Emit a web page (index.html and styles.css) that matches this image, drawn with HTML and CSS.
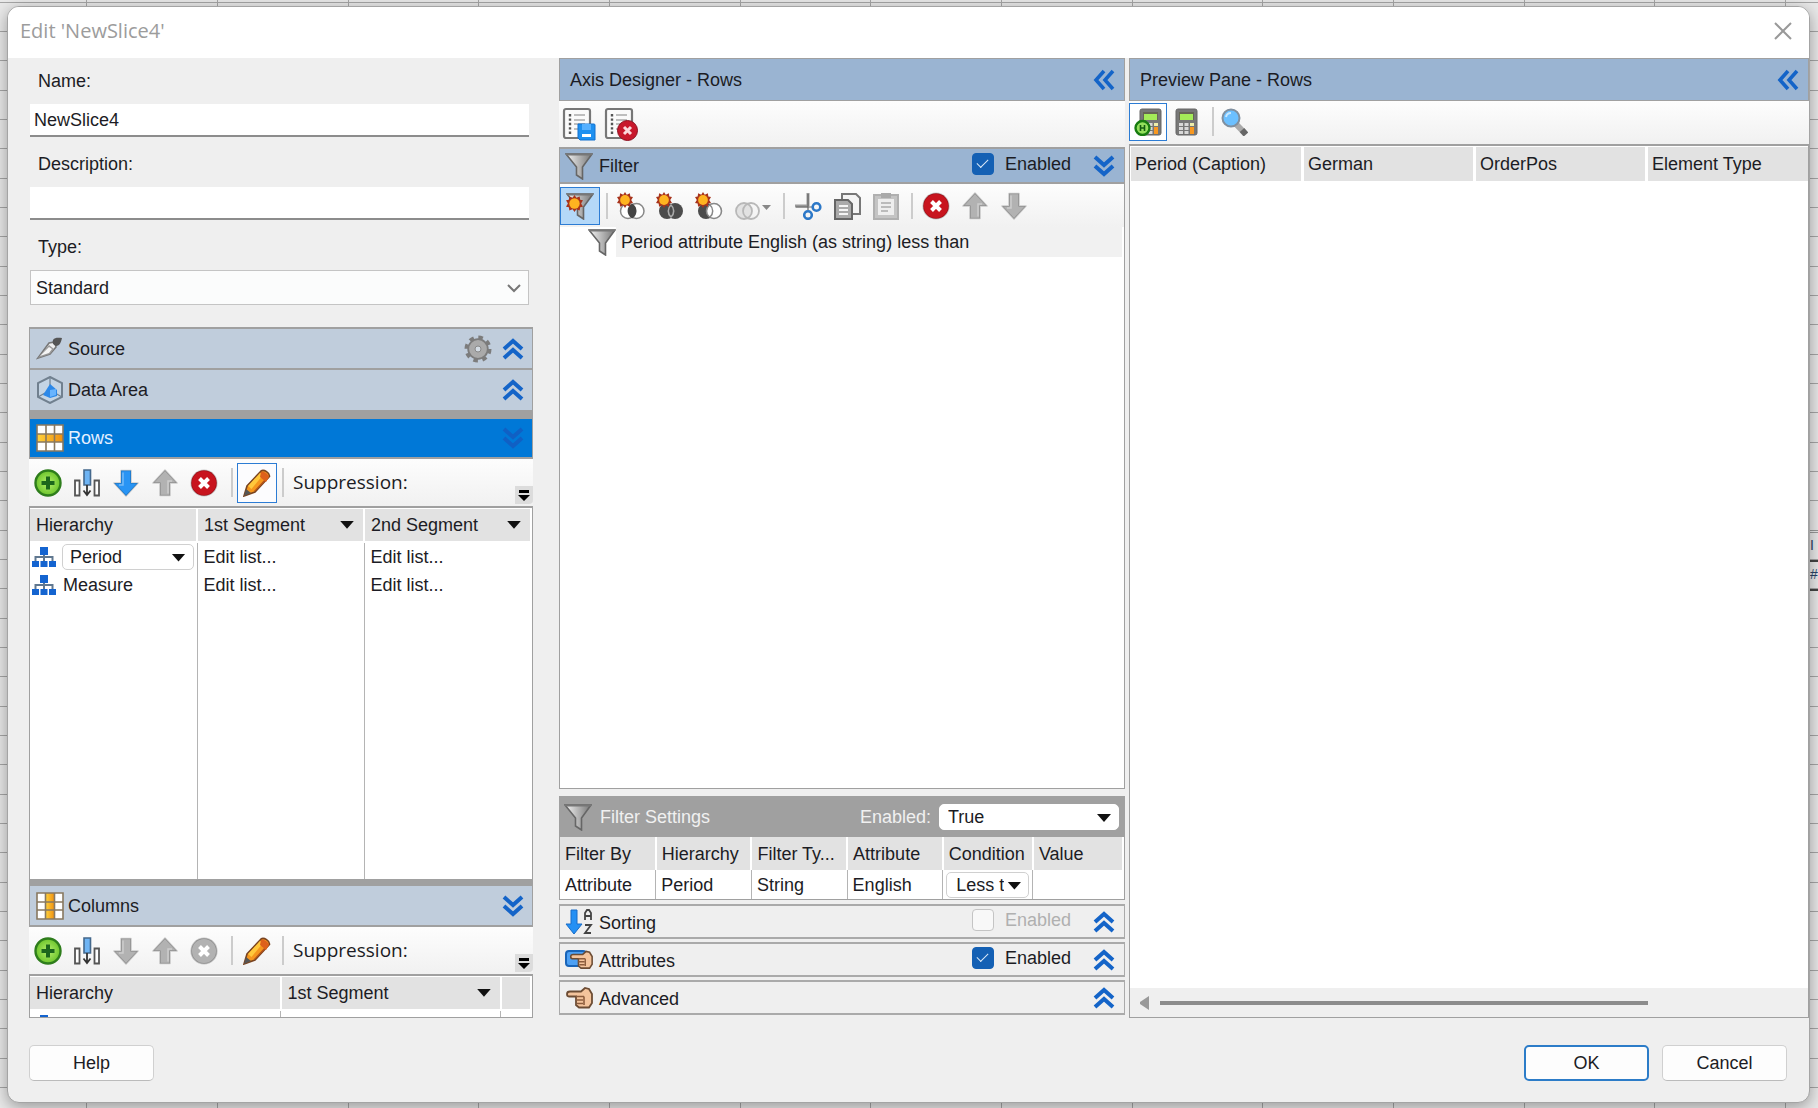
FILE: index.html
```html
<!DOCTYPE html>
<html lang="en">
<head>
    <meta charset="UTF-8">
    <meta name="viewport" content="width=device-width, initial-scale=1.0">
    <title>Edit 'NewSlice4'</title>
    <link rel="stylesheet" href="styles.css">
</head>
<body>
    <!-- Icons -->
    <svg class="sprite" aria-hidden="true">
        <defs>
            <linearGradient id="g-funnel" x1="0" x2="1"><stop offset="0" stop-color="#f4f4f4"/><stop offset="1" stop-color="#777"/></linearGradient>
            <linearGradient id="g-orange" x1="0" x2="1"><stop offset="0" stop-color="#ffd23c"/><stop offset="1" stop-color="#f09010"/></linearGradient>
            <radialGradient id="g-green"><stop offset="0" stop-color="#b4f06a"/><stop offset="1" stop-color="#6cc42c"/></radialGradient>
        </defs>
        <symbol id="up2" viewBox="0 0 22 22"><path d="M2 11l9-8 9 8M2 20l9-8 9 8" fill="none" stroke="#1464c8" stroke-width="4"/></symbol>
        <symbol id="down2" viewBox="0 0 22 22"><path d="M2 2l9 8 9-8M2 11l9 8 9-8" fill="none" stroke="currentColor" stroke-width="4"/></symbol>
        <symbol id="left2" viewBox="0 0 22 22"><path d="M11 2l-8 9 8 9M20 2l-8 9 8 9" fill="none" stroke="#1464c8" stroke-width="3.6"/></symbol>
        <symbol id="add" viewBox="0 0 28 28"><circle cx="14" cy="14" r="12.5" fill="url(#g-green)" stroke="#2e7d1c" stroke-width="2.4"/><path d="M14 7.500v13M7.500 14h13" stroke="#1c661c" stroke-width="4"/></symbol>
        <symbol id="insert" viewBox="0 0 28 28"><path d="M2 11.500h4.500v15H2zM21.500 11.500H26v15h-4.500z" fill="#fff" stroke="#555" stroke-width="1.800"/><path d="M11 1h6.500v15H11z" fill="#6eb4f4" stroke="#44688c" stroke-width="1.600"/><path d="M14 16v10M10.500 21.500L14 26l3.500-4.500" fill="none" stroke="#333" stroke-width="1.800"/></symbol>
        <symbol id="arrow" viewBox="0 0 28 28"><path d="M9 1.500h10V14h7L14 27 2 14h7z" fill="currentColor" stroke="#0000002e" stroke-width="1.600" stroke-linejoin="round"/><path d="M11 3.500V16H7" fill="none" stroke="#ffffff59" stroke-width="1.500"/></symbol>
        <symbol id="del" viewBox="0 0 28 28"><circle cx="14" cy="14" r="12.800" fill="currentColor" stroke="#00000033" stroke-width="1.600"/><path d="M9.500 9.500l9 9M18.500 9.500l-9 9" stroke="#fff" stroke-width="4"/></symbol>
        <symbol id="pencil" viewBox="0 0 28 28"><path d="M1 27l3-10L18 2c3-2 9 2 8.500 5.500L12 23z" fill="#f5961e" stroke="#7a4420" stroke-width="1.600"/><path d="M5 17L17 4l3 2L8.500 20z" fill="#ffc83c"/><path d="M11 22L23 9l2.500 0-13 13z" fill="#b4521a"/><path d="M17 8l6 5 3-5c-1-3-5-6-8-5z" fill="#dd601c"/><path d="M1 27l2-7 5 4z" fill="#555"/></symbol>
        <symbol id="funnel" viewBox="0 0 28 28"><path d="M1 2h26l-9.500 13v12l-6-4v-8z" fill="url(#g-funnel)" stroke="#666" stroke-width="1.600"/><path d="M1 2.500h26" stroke="#777" stroke-width="2"/></symbol>
        <symbol id="spark" viewBox="0 0 18 18"><path d="M9 0l2 3 3.500-1.500L15 5l3 .5L16 9l2 3.500-3 .5-.5 3.500L11 15l-2 3-2-3-3.500 1.500L3 13l-3-.5L2 9 0 5.500 3 5l.5-3.500L7 3z" fill="#a8341c"/><circle cx="9" cy="9" r="5.500" fill="#ffb420"/></symbol>
        <symbol id="funnel-new" viewBox="0 0 28 28"><use href="#funnel"/><use href="#spark" x="0" y="3" width="17" height="17"/></symbol>
        <symbol id="and" viewBox="0 0 28 28"><circle cx="19.500" cy="19" r="7.500" fill="#fff" stroke="#888" stroke-width="1.500"/><circle cx="11" cy="19" r="7.500" fill="#fff" stroke="#888" stroke-width="1.500"/><path d="M15.200 12.800a7.500 7.500 0 0 1 0 12.400 7.500 7.500 0 0 1-3.600-6.200c0-3 1.500-5 3.600-6.200z" fill="#444" stroke="#444" stroke-width="2"/><use href="#spark" x="0" y="0" width="16" height="16"/></symbol>
        <symbol id="or" viewBox="0 0 28 28"><circle cx="19" cy="19" r="8" fill="#4c4c4c"/><circle cx="11" cy="19" r="8" fill="#4c4c4c"/><path d="M15 13a8 8 0 0 1 0 12 8 8 0 0 1 0-12z" fill="none" stroke="#aaa" stroke-width="1.600"/><use href="#spark" x="0" y="0" width="16" height="16"/></symbol>
        <symbol id="minus" viewBox="0 0 28 28"><circle cx="11" cy="19" r="8" fill="#4c4c4c"/><circle cx="19" cy="19" r="7.500" fill="#fff" stroke="#888" stroke-width="1.600"/><path d="M15 13a8 8 0 0 1 0 12" fill="none" stroke="#888" stroke-width="1.500"/><use href="#spark" x="0" y="0" width="16" height="16"/></symbol>
        <symbol id="sets" viewBox="0 0 38 28"><circle cx="10" cy="19" r="8" fill="#e2e2e2" stroke="#b8b8b8" stroke-width="1.800"/><circle cx="17" cy="19" r="8" fill="none" stroke="#b8b8b8" stroke-width="1.800"/><path d="M28 13h9l-4.500 5z" fill="#888"/></symbol>
        <symbol id="cut" viewBox="0 0 28 28"><path d="M14 1v13M1 14h13" stroke="#999" stroke-width="3"/><path d="M14 2v16M2 15h17" stroke="#666" stroke-width="1.200"/><circle cx="22.500" cy="15" r="3.800" fill="none" stroke="#2c78c8" stroke-width="2.600"/><circle cx="14" cy="23" r="3.800" fill="none" stroke="#2c78c8" stroke-width="2.600"/></symbol>
        <symbol id="copy" viewBox="0 0 28 28"><path d="M9 2h14l4 4v16H9z" fill="#f4f4f4" stroke="#777" stroke-width="2"/><path d="M2 8h13l4 4v15H2z" fill="#aaa" stroke="#666" stroke-width="2"/><path d="M6 14h9M6 18h9M6 22h9" stroke="#f4f4f4" stroke-width="1.800"/></symbol>
        <symbol id="paste" viewBox="0 0 28 28"><path d="M2 3h24v24H2z" fill="#c4c4c4" stroke="#b0b0b0" stroke-width="2"/><path d="M6 7h16v16H6z" fill="#eee"/><path d="M9 1h10v5H9z" fill="#aaa"/><path d="M9 11h10M9 15h10M9 19h7" stroke="#aaa" stroke-width="1.600"/></symbol>
        <symbol id="gear" viewBox="0 0 28 28"><circle cx="14" cy="14" r="11.500" fill="none" stroke="#7c7c7c" stroke-width="4" stroke-dasharray="4.500 4.530"/><circle cx="14" cy="14" r="9.800" fill="#aaa" stroke="#7c7c7c" stroke-width="1.800"/><circle cx="14" cy="14" r="3" fill="#d4dce4" stroke="#888"/></symbol>
        <symbol id="source" viewBox="0 0 28 28"><path d="M2 23L13 8l6-1 1 5-6 7z" fill="#eee" stroke="#777" stroke-width="1.600"/><path d="M17 5c2-3 6-2 9-2-1 4-2 8-6 8-3-1-4-3-3-6z" fill="#555"/><path d="M2 23l12-4 4-5-5-4z" fill="#999"/><path d="M4 21l9-9 3 2-3 4z" fill="#f4f4f4"/></symbol>
        <symbol id="cube" viewBox="0 0 28 28"><path d="M14 1l12 6v14l-12 6-12-6V7z" fill="#c4d4e4" stroke="#71808f" stroke-width="2"/><path d="M14 1v9M2 21l7-4M26 21l-7-4" stroke="#71808f" stroke-width="1.200"/><path d="M14 8l7 6v6l-7 2-7-3z" fill="#2c88e8"/><path d="M14 14l6-1v6l-6 2z" fill="#68b4ff"/></symbol>
        <symbol id="grid-rows" viewBox="0 0 28 28"><path d="M1 1h26v26H1z" fill="#fff"/><path d="M1 10h26v8H1z" fill="url(#g-orange)"/><path d="M1 1h26v26H1zM10 1v26M18.500 1v26M1 10h26M1 18h26" fill="none" stroke="#887860" stroke-width="1.600"/></symbol>
        <symbol id="grid-cols" viewBox="0 0 28 28"><path d="M1 1h26v26H1z" fill="#fff"/><path d="M9.500 1h9v26h-9z" fill="url(#g-orange)"/><path d="M1 1h26v26H1zM9.500 1v26M18.500 1v26M1 10h26M1 18h26" fill="none" stroke="#887860" stroke-width="1.600"/></symbol>
        <symbol id="tree" viewBox="0 0 24 20"><path d="M12 6v4M3.500 15v-5h17v5M12 10v5" fill="none" stroke="#607890" stroke-width="2"/><path d="M8 0h8v8H8zM0 14h7v6H0zM8.500 14h7v6h-7zM17 14h7v6h-7z" fill="#1464d0"/></symbol>
        <symbol id="page" viewBox="0 0 34 34"><rect x="2" y="2" width="26" height="29" rx="2" fill="#fafafa" stroke="#777" stroke-width="2.200"/><path d="M8 7v20" stroke="#555" stroke-width="2.400" stroke-dasharray="2.400 2"/><path d="M12 8h11M12 13h11M12 17h11M12 22h11" stroke="#aaa" stroke-width="1.400"/></symbol>
        <symbol id="page-save" viewBox="0 0 34 34"><use href="#page"/><path d="M16 17h16q1 0 1 1v15H18l-2-2z" fill="#1e90f0" stroke="#1070d0"/><path d="M20 17h9v6h-9z" fill="#55b0ff"/><path d="M20 27h9v3h-9z" fill="#fff"/></symbol>
        <symbol id="page-del" viewBox="0 0 34 34"><use href="#page"/><circle cx="23.500" cy="23.500" r="10" fill="#c8182c" stroke="#8c1020"/><path d="M20 20l7 7M27 20l-7 7" stroke="#fbd8dc" stroke-width="3"/></symbol>
        <symbol id="calc" viewBox="0 0 28 28"><rect x="4" y="1" width="21" height="26" rx="2" fill="#777" stroke="#666"/><path d="M7 4h15v8H7z" fill="#665"/><path d="M8 6h13v6H8z" fill="#a4ec58"/><path d="M7 15h4v3H7zM12.500 15h4v3h-4zM7 19h4v3H7zM12.500 19h4v3h-4zM7 23h4v3H7zM12.500 23h4v3h-4z" fill="#d8d8d8"/><path d="M18 15h4v3h-4z" fill="#eea"/><path d="M18 19h4v7h-4z" fill="#f89820"/></symbol>
        <symbol id="calc-auto" viewBox="0 0 28 28"><use href="#calc" x="2"/><circle cx="8.500" cy="20" r="7" fill="#94e05c" stroke="#187c10" stroke-width="2.400"/><path d="M6.500 17v6M10.500 17v6M6.500 20h4" fill="none" stroke="#145c10" stroke-width="1.600"/></symbol>
        <symbol id="search" viewBox="0 0 28 28"><path d="M16 16l9.500 10" stroke="#aaa" stroke-width="6"/><path d="M22 22l4 4.500" stroke="#666" stroke-width="6"/><circle cx="11" cy="10" r="8.500" fill="#6cc0ff" stroke="#8090a0" stroke-width="2"/><path d="M6 9a5 5 0 0 1 5-4" fill="none" stroke="#c8e8ff" stroke-width="2"/></symbol>
        <symbol id="hand" viewBox="0 0 28 22"><path d="M2 7c0-2 1-2.500 3-2.500h11L20 1l4 1 3 5v9l-3 4.500H14L11 18V9.500H4C2.500 9.500 2 9 2 7z" fill="#f4c49c" stroke="#6c4c34" stroke-width="1.800"/><path d="M11 9.500h8M11 13h7M12 16.500h6M19 9.500V18" stroke="#8c5c3c" stroke-width="1.600"/></symbol>
        <symbol id="hand-tag" viewBox="0 0 28 22"><rect x="1" y="2" width="20" height="15" rx="3" fill="#4ca0f4" stroke="#1864b8" stroke-width="2"/><use href="#hand" x="4" y="0" width="24" height="22"/></symbol>
        <symbol id="az" viewBox="0 0 28 28"><path d="M6 2h6v14h5L9 26 1 16h5z" fill="#2490f4" stroke="#186cc8"/><path d="M20 12V5l2-3h2l2 3v7M20 8h6M20 17h6l-6 8h6" fill="none" stroke="#444" stroke-width="1.800"/></symbol>
    </svg>

    <!-- Spreadsheet cells showing beside the dialog -->
    <div class="sheet-cells" aria-hidden="true"><div>I</div><div>#</div></div>

    <div class="dialog" role="dialog" aria-labelledby="dialog-title">
        <div class="titlebar">
            <h1 id="dialog-title">Edit 'NewSlice4'</h1>
            <button class="close" aria-label="Close"><svg viewBox="0 0 18 18"><path d="M1 1l16 16M17 1L1 17"/></svg></button>
        </div>

        <div class="content">
            <!-- Left column -->
            <div class="left">
                <div class="fields">
                    <label for="name">Name:</label>
                    <input type="text" id="name" value="NewSlice4">
                    <label for="description">Description:</label>
                    <input type="text" id="description">
                    <label for="type">Type:</label>
                    <div class="select-wrap">
                        <select id="type"><option>Standard</option></select>
                        <svg viewBox="0 0 14 9"><path d="M1 1l6 6 6-6"/></svg>
                    </div>
                </div>

                <div class="sections">
                    <div class="bar">
                        <svg class="icon"><use href="#source"/></svg>
                        <h2>Source</h2>
                        <button aria-label="Source settings"><svg class="icon"><use href="#gear"/></svg></button>
                        <button aria-label="Expand"><svg class="chev"><use href="#up2"/></svg></button>
                    </div>
                    <div class="bar">
                        <svg class="icon"><use href="#cube"/></svg>
                        <h2>Data Area</h2>
                        <button aria-label="Expand"><svg class="chev"><use href="#up2"/></svg></button>
                    </div>
                    <div class="bar split active">
                        <svg class="icon"><use href="#grid-rows"/></svg>
                        <h2>Rows</h2>
                        <button aria-label="Collapse"><svg class="chev"><use href="#down2"/></svg></button>
                    </div>
                    <div class="toolbar axis-tools">
                        <button aria-label="Add"><svg class="icon"><use href="#add"/></svg></button>
                        <button aria-label="Insert"><svg class="icon"><use href="#insert"/></svg></button>
                        <button aria-label="Move down"><svg class="icon blue"><use href="#arrow"/></svg></button>
                        <button aria-label="Move up" disabled><svg class="icon grey flip"><use href="#arrow"/></svg></button>
                        <button aria-label="Delete"><svg class="icon red"><use href="#del"/></svg></button>
                        <span class="sep"></span>
                        <button class="pressed" aria-label="Edit"><svg class="icon"><use href="#pencil"/></svg></button>
                        <span class="sep"></span>
                        <span class="suppression">Suppression:</span>
                        <button class="overflow" aria-label="More"><svg viewBox="0 0 18 18"><path d="M4 4h10v3H4zM3 9h12l-6 6z"/></svg></button>
                    </div>
                    <div class="axis-table">
                        <table>
                            <thead>
                                <tr>
                                    <th>Hierarchy</th>
                                    <th><div class="sortable">1st Segment<i class="tri"></i></div></th>
                                    <th><div class="sortable">2nd Segment<i class="tri"></i></div></th>
                                </tr>
                            </thead>
                            <tbody>
                                <tr>
                                    <td>
                                        <div class="hier">
                                            <svg class="tree"><use href="#tree"/></svg>
                                            <div class="combo">
                                                <select aria-label="Hierarchy"><option>Period</option></select>
                                                <i class="tri"></i>
                                            </div>
                                        </div>
                                    </td>
                                    <td>Edit list...</td>
                                    <td>Edit list...</td>
                                </tr>
                                <tr>
                                    <td><div class="hier"><svg class="tree"><use href="#tree"/></svg>Measure</div></td>
                                    <td>Edit list...</td>
                                    <td>Edit list...</td>
                                </tr>
                                <tr class="filler"><td></td><td></td><td></td></tr>
                            </tbody>
                        </table>
                    </div>
                    <div class="bar split">
                        <svg class="icon"><use href="#grid-cols"/></svg>
                        <h2>Columns</h2>
                        <button aria-label="Collapse"><svg class="chev"><use href="#down2"/></svg></button>
                    </div>
                    <div class="toolbar axis-tools">
                        <button aria-label="Add"><svg class="icon"><use href="#add"/></svg></button>
                        <button aria-label="Insert"><svg class="icon"><use href="#insert"/></svg></button>
                        <button aria-label="Move down" disabled><svg class="icon grey"><use href="#arrow"/></svg></button>
                        <button aria-label="Move up" disabled><svg class="icon grey flip"><use href="#arrow"/></svg></button>
                        <button aria-label="Delete" disabled><svg class="icon grey"><use href="#del"/></svg></button>
                        <span class="sep"></span>
                        <button aria-label="Edit"><svg class="icon"><use href="#pencil"/></svg></button>
                        <span class="sep"></span>
                        <span class="suppression">Suppression:</span>
                        <button class="overflow" aria-label="More"><svg viewBox="0 0 18 18"><path d="M4 4h10v3H4zM3 9h12l-6 6z"/></svg></button>
                    </div>
                    <div class="axis-table columns-table">
                        <table>
                            <thead>
                                <tr>
                                    <th>Hierarchy</th>
                                    <th><div class="sortable">1st Segment<i class="tri"></i></div></th>
                                    <th></th>
                                </tr>
                            </thead>
                            <tbody>
                                <tr><td><svg class="tree"><use href="#tree"/></svg></td><td></td><td></td></tr>
                            </tbody>
                        </table>
                    </div>
                </div>
            </div>

            <!-- Axis designer -->
            <div class="designer">
                <div class="pane-head">
                    <h2>Axis Designer - Rows</h2>
                    <button aria-label="Collapse"><svg class="chev"><use href="#left2"/></svg></button>
                </div>
                <div class="toolbar page-tools">
                    <button aria-label="Save"><svg class="icon"><use href="#page-save"/></svg></button>
                    <button aria-label="Delete"><svg class="icon"><use href="#page-del"/></svg></button>
                </div>
                <div class="filter-head">
                    <svg class="icon"><use href="#funnel"/></svg>
                    <h2>Filter</h2>
                    <label><input type="checkbox" checked>Enabled</label>
                    <button aria-label="Collapse"><svg class="chev"><use href="#down2"/></svg></button>
                </div>
                <div class="filter-body">
                    <div class="toolbar filter-tools">
                        <button class="pressed" aria-label="New filter"><svg class="icon"><use href="#funnel-new"/></svg></button>
                        <span class="sep"></span>
                        <button aria-label="New intersection"><svg class="icon"><use href="#and"/></svg></button>
                        <button aria-label="New union"><svg class="icon"><use href="#or"/></svg></button>
                        <button aria-label="New difference"><svg class="icon"><use href="#minus"/></svg></button>
                        <button aria-label="Change set" disabled><svg class="icon wide"><use href="#sets"/></svg></button>
                        <span class="sep"></span>
                        <button aria-label="Cut"><svg class="icon"><use href="#cut"/></svg></button>
                        <button aria-label="Copy"><svg class="icon"><use href="#copy"/></svg></button>
                        <button aria-label="Paste" disabled><svg class="icon"><use href="#paste"/></svg></button>
                        <span class="sep"></span>
                        <button aria-label="Delete"><svg class="icon red"><use href="#del"/></svg></button>
                        <button aria-label="Move up" disabled><svg class="icon grey flip"><use href="#arrow"/></svg></button>
                        <button aria-label="Move down" disabled><svg class="icon grey"><use href="#arrow"/></svg></button>
                    </div>
                    <div class="filter-item">
                        <svg class="icon"><use href="#funnel"/></svg>
                        <span>Period attribute English (as string) less than</span>
                    </div>
                </div>

                <div class="settings">
                    <div class="settings-head">
                        <svg class="icon"><use href="#funnel"/></svg>
                        <h2>Filter Settings</h2>
                        <label for="filter-enabled">Enabled:</label>
                        <div class="combo">
                            <select id="filter-enabled"><option>True</option></select>
                            <i class="tri"></i>
                        </div>
                    </div>
                    <table>
                        <thead>
                            <tr><th>Filter By</th><th>Hierarchy</th><th>Filter Ty...</th><th>Attribute</th><th>Condition</th><th>Value</th></tr>
                        </thead>
                        <tbody>
                            <tr>
                                <td>Attribute</td><td>Period</td><td>String</td><td>English</td>
                                <td class="condition">
                                    <div class="combo">
                                        <select aria-label="Condition"><option>Less than</option></select>
                                        <i class="tri"></i>
                                    </div>
                                </td>
                                <td></td>
                            </tr>
                        </tbody>
                    </table>
                </div>

                <div class="option">
                    <svg class="icon"><use href="#az"/></svg>
                    <h2>Sorting</h2>
                    <label class="off"><input type="checkbox" disabled>Enabled</label>
                    <button aria-label="Expand"><svg class="chev"><use href="#up2"/></svg></button>
                </div>
                <div class="option">
                    <svg class="icon"><use href="#hand-tag"/></svg>
                    <h2>Attributes</h2>
                    <label><input type="checkbox" checked>Enabled</label>
                    <button aria-label="Expand"><svg class="chev"><use href="#up2"/></svg></button>
                </div>
                <div class="option">
                    <svg class="icon"><use href="#hand"/></svg>
                    <h2>Advanced</h2>
                    <button aria-label="Expand"><svg class="chev"><use href="#up2"/></svg></button>
                </div>
            </div>

            <!-- Preview pane -->
            <div class="preview">
                <div class="pane-head">
                    <h2>Preview Pane - Rows</h2>
                    <button aria-label="Collapse"><svg class="chev"><use href="#left2"/></svg></button>
                </div>
                <div class="toolbar preview-tools">
                    <button class="pressed" aria-label="Automatic calculation"><svg class="icon"><use href="#calc-auto"/></svg></button>
                    <button aria-label="Calculate"><svg class="icon"><use href="#calc"/></svg></button>
                    <span class="sep"></span>
                    <button aria-label="Search"><svg class="icon"><use href="#search"/></svg></button>
                </div>
                <div class="preview-body">
                    <table>
                        <thead>
                            <tr><th>Period (Caption)</th><th>German</th><th>OrderPos</th><th>Element Type</th></tr>
                        </thead>
                    </table>
                    <div class="scrollbar">
                        <svg viewBox="0 0 10 14"><path d="M10 0v14L1 8V6z"/></svg>
                        <div class="thumb"></div>
                    </div>
                </div>
            </div>
        </div>

        <div class="footer">
            <button>Help</button>
            <button class="ok">OK</button>
            <button>Cancel</button>
        </div>
    </div>
</body>
</html>
```

FILE: styles.css
```css
* { margin: 0; padding: 0; box-sizing: border-box; }
body {
    min-height: 100vh;
    display: flex;
    padding: 6px 8px 5px 7px;
    font-family: "Liberation Sans", Arial, sans-serif;
    font-size: 18px;
    line-height: 24px;
    color: #1c1c24;
    position: relative;
    overflow: hidden;
    /* worksheet gridlines */
    background-color: #e9e9e9;
    background-image:
        repeating-linear-gradient(to right, transparent 0 86px, #a6a6a6 86px 87px, transparent 87px 217px, #a6a6a6 217px 218px, transparent 218px 348px, #a6a6a6 348px 349px, transparent 349px 392px),
        repeating-linear-gradient(to bottom, transparent 0 2px, #a6a6a6 2px 3px, transparent 3px 31px, #a6a6a6 31px 32px, transparent 32px 60px, #a6a6a6 60px 61px, transparent 61px 88px);
}
h1, h2 { font-size: 18px; font-weight: normal; }
button, input, select { font: inherit; color: inherit; }
button { background: none; border: none; }
svg { display: block; }
.sprite { position: absolute; width: 0; height: 0; }
.icon { width: 28px; height: 28px; }
.chev { width: 22px; height: 22px; }
.blue { color: #2894f4; }
.red { color: #c8141e; }
.grey { color: #b2b2b2; }
.flip { transform: rotate(180deg); }

.sheet-cells {
    position: absolute;
    right: 0;
    top: 530px;
    width: 8px;
    font-size: 14px;
    color: #2c4468;
    border-top: 3px double #999;
}
.sheet-cells div {
    height: 29px;
    border-bottom: 2px solid #444;
}

.dialog {
    flex: 1;
    display: flex;
    flex-direction: column;
    position: relative;
    background-color: #efefef;
    border: 1px solid #a4a4a4;
    border-radius: 12px;
    box-shadow: 0 4px 16px rgba(0, 0, 0, 0.35);
    overflow: hidden;
}
.titlebar {
    height: 51px;
    display: flex;
    justify-content: space-between;
    align-items: center;
    padding: 0 17px 3px 12px;
    background-color: #fff;
    color: #9c9c9c;
}
.titlebar h1 {
    font-family: "Open Sans", "Noto Sans", sans-serif;
    font-size: 20px;
}
.close svg {
    width: 18px;
    height: 18px;
    fill: none;
    stroke: #999;
    stroke-width: 2;
}

.content {
    flex: 1;
    display: grid;
    grid-template-columns: 551fr 570fr 680fr;
}
.left {
    display: flex;
    flex-direction: column;
    padding: 0 26px 0 21px;
}
.fields {
    padding: 11px 4px 0 1px;
    margin-bottom: 22px;
}
.fields label {
    display: block;
    padding-left: 8px;
    margin-bottom: 11px;
}
.fields input {
    display: block;
    width: 100%;
    height: 33px;
    margin-bottom: 15px;
    padding: 2px 4px 0;
    border: none;
    border-bottom: 2px solid #8c8c8c;
    background-color: #fff;
}
.select-wrap { position: relative; }
.select-wrap select {
    appearance: none;
    width: 100%;
    height: 35px;
    padding: 0 5px;
    border: 1px solid #c4c4c4;
    background-color: #fbfcfc;
}
.select-wrap svg {
    position: absolute;
    right: 8px;
    top: 14px;
    width: 14px;
    height: 9px;
    fill: none;
    stroke: #777;
    stroke-width: 2;
}

.sections {
    flex: 1;
    display: flex;
    flex-direction: column;
}
.bar {
    display: flex;
    align-items: center;
    height: 43px;
    padding: 0 8px 0 6px;
    gap: 4px;
    background-color: #c0cddc;
    border: 2px solid #a0a0a0;
    border-width: 2px 1px;
}
.bar + .bar { border-top: none; height: 42px; }
.bar h2 { flex: 1; }
.bar .chev { color: #1464c8; margin-left: 6px; }
.bar.split, .bar + .bar.split {
    height: 48px;
    border-top: 7px solid #a0a0a0;
}
.bar + .bar.split { height: 47px; }
.bar.active { background-color: #0078d7; color: #e4f0ff; }
.bar.active .chev { color: #1060c4; }

.toolbar {
    display: flex;
    align-items: center;
    background-image: linear-gradient(to bottom, #fdfdfd, #f1f1f1);
}
.sep {
    width: 2px;
    height: 29px;
    background-color: #ccc;
}
.axis-tools {
    height: 47px;
    padding-left: 5px;
    gap: 11px;
    position: relative;
}
.axis-tools .sep + button {
    padding: 5px;
    margin: 0 -8px 0 -5px;
    border: 1px solid transparent;
}
.axis-tools .sep { margin: 0 -2px 0 2px; }
.axis-tools .pressed.pressed { border-color: #2c7cd4; background-color: #fcfcfe; }
.suppression {
    font-family: "Open Sans", "Noto Sans", sans-serif;
    font-size: 19px;
    padding-bottom: 2px;
}
.overflow {
    position: absolute;
    right: 0;
    bottom: 2px;
    background-color: #dcdcdc;
    border-radius: 0 0 4px 0;
}
.overflow svg { width: 18px; height: 18px; }

table {
    width: 100%;
    table-layout: fixed;
    border-collapse: collapse;
}
th {
    font-weight: normal;
    text-align: left;
    background-color: #e2e2e2;
}
.tri {
    width: 14px;
    height: 8px;
    background-color: #111;
    clip-path: polygon(0 0, 100% 0, 50% 100%);
}
.axis-table {
    flex: 1;
    display: grid;
    background-color: #fff;
    border: 1px solid #a0a0a0;
    border-top-width: 2px;
    border-bottom: none;
}
.axis-table th {
    height: 33px;
    padding-left: 6px;
    border: 2px solid #fff;
    border-left: none;
    border-top-width: 1px;
}
.axis-table tr > * + * { border-left: 1px solid #b4b4b4; }
.axis-table td { height: 29px; padding-left: 6px; }
.axis-table td:first-child { padding-left: 2px; }
.axis-table .filler td { height: auto; }
.sortable {
    display: flex;
    justify-content: space-between;
    align-items: center;
    padding-right: 9px;
}
.hier {
    display: flex;
    align-items: center;
    gap: 7px;
}
.tree { width: 24px; height: 20px; }
.combo { position: relative; }
.combo select {
    appearance: none;
    display: block;
    width: 100%;
    height: 26px;
    border: 1px solid #d0d0d0;
    border-radius: 5px;
    background-color: #fff;
}
.combo .tri { position: absolute; right: 8px; top: 10px; pointer-events: none; }
.hier .combo { flex: 1; margin-right: 3px; margin-left: -1px; }
.hier .combo select { padding-left: 7px; }
.columns-table {
    flex: none;
    height: 44px;
    overflow: hidden;
    border-bottom: 1px solid #a0a0a0;
}
.columns-table tr > :nth-child(1) { width: 50%; }
.columns-table tr > :nth-child(2) { width: 44%; }

.designer {
    display: flex;
    flex-direction: column;
    margin: 0 4px 3px 0;
}
.pane-head {
    display: flex;
    align-items: center;
    justify-content: space-between;
    height: 43px;
    padding: 0 9px 0 10px;
    background-color: #9ab4d2;
    border: 1px solid #a0a0a0;
}
.page-tools {
    height: 46px;
    padding-left: 3px;
    gap: 8px;
}
.page-tools .icon { width: 34px; height: 34px; }
.filter-head {
    display: flex;
    align-items: center;
    height: 37px;
    padding: 0 9px 0 5px;
    gap: 6px;
    background-color: #9ab4d2;
    border: 2px solid #a0a0a0;
    border-width: 2px 1px;
}
.filter-head h2, .option h2 { flex: 1; }
.filter-head label, .option label {
    display: flex;
    align-items: center;
    gap: 11px;
    margin-right: 16px;
    margin-bottom: 4px;
}
.filter-head .chev { color: #1464c8; }
input[type="checkbox"] {
    appearance: none;
    width: 22px;
    height: 22px;
    border: 1px solid #c4c4c4;
    border-radius: 4px;
    background-color: #f8f8f8;
    display: grid;
    place-items: center;
}
input[type="checkbox"]:checked {
    background-color: #1460b4;
    border-color: #1460b4;
}
input[type="checkbox"]:checked::before {
    content: "";
    width: 10px;
    height: 5px;
    border: solid #dceaf8;
    border-width: 0 0 1px 1px;
    rotate: -45deg;
    translate: 0 -2px;
}
.off { color: #b0b0b0; }
.filter-body {
    flex: 1;
    background-color: #fff;
    border: 1px solid #a0a0a0;
    border-top: none;
}
.filter-tools {
    height: 43px;
    gap: 11px;
}
.filter-tools .pressed {
    padding: 4px 5px;
    border: 1px solid #2c7cd4;
    background-color: #b4d8f8;
    margin-right: -5px;
}
.filter-tools .sep { margin-right: -2px; height: 26px; }
.filter-tools .wide { width: 38px; }
.filter-item {
    display: flex;
    align-items: center;
    padding: 0 2px 0 28px;
}
.filter-item span {
    flex: 1;
    height: 30px;
    padding: 3px 5px;
    background-color: #f1f1f1;
}

.settings {
    margin: 7px 0 4px;
    border: 1px solid #a0a0a0;
    background-color: #fff;
}
.settings-head {
    display: flex;
    align-items: center;
    height: 40px;
    padding: 0 5px 0 4px;
    gap: 8px;
    background-color: #a0a0a0;
    color: #f0f0f0;
}
.settings-head h2 { flex: 1; }
.settings-head .combo { width: 180px; color: #1c1c24; }
.settings-head .combo select { padding-left: 8px; border-color: #fff; }
.settings th { height: 33px; border-right: 2px solid #fff; }
.settings th, .settings td { padding-left: 5px; width: 17%; }
.settings tr > * + * { border-left: 1px solid #b4b4b4; }
.settings td { height: 29px; }
.settings tr > :nth-child(n + 5) { width: 16%; }
.settings tr > .condition { padding: 0 3px; }
.condition .combo select { padding: 0 24px 0 9px; }

.option {
    display: flex;
    align-items: center;
    height: 35px;
    padding: 0 9px 0 5px;
    gap: 6px;
    margin-bottom: 3px;
    border: 2px solid #aaa;
    border-width: 2px 1px;
}
.option:last-child { margin-bottom: 0; }
.option h2 { padding-top: 2px; }

.preview {
    display: flex;
    flex-direction: column;
}
.preview-tools {
    height: 43px;
    gap: 10px;
    padding-bottom: 2px;
}
.preview-tools .pressed {
    padding: 4px;
    border: 1px solid #2c7cd4;
    background-color: #fff;
    margin-right: -5px;
}
.preview-tools .sep { margin: 0 -4px 0 2px; }
.preview-body {
    flex: 1;
    display: flex;
    flex-direction: column;
    justify-content: space-between;
    background-color: #fff;
    border: 1px solid #a0a0a0;
    border-top-width: 2px;
}
.preview th {
    height: 34px;
    padding-left: 4px;
    border-left: 3px solid #fff;
    border-top: 1px solid #fff;
    width: 172px;
}
.preview th:last-child { width: auto; }
.preview th:first-child { border-left-width: 1px; }
.scrollbar {
    display: flex;
    align-items: center;
    height: 29px;
    padding-left: 9px;
    gap: 11px;
    background-color: #efefef;
}
.scrollbar svg { width: 10px; height: 14px; fill: #999; }
.thumb {
    width: 73%;
    height: 4px;
    background-color: #8c8c8c;
}

.footer {
    display: flex;
    align-items: center;
    gap: 13px;
    height: 84px;
    padding: 5px 22px 0 21px;
}
.footer button {
    width: 125px;
    height: 36px;
    border: 1px solid #d0d0d0;
    border-bottom-color: #bbb;
    border-radius: 5px;
    background-color: #fdfdfd;
}
.footer .ok {
    margin-left: auto;
    border: 2px solid #2c7cc8;
}
```
